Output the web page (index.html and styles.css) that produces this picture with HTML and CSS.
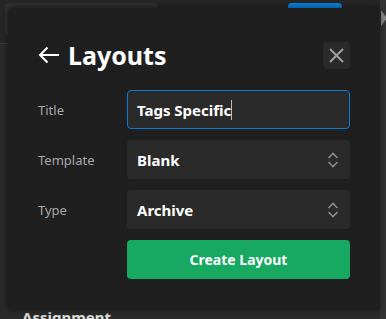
FILE: index.html
```html
<!DOCTYPE html>
<html lang="en">
<head>
    <meta charset="UTF-8">
    <title>Layouts</title>
    <link rel="stylesheet" href="styles.css">
</head>
<body>
<div class="page">
    <div class="topbar">
        <div class="search"></div>
        <div class="publish"></div>
    </div>
    <div class="section">Assignment</div>
    <div class="scroller">
        <span class="scroll-arrow"></span>
    </div>
</div>

<div class="modal">
    <div class="modal-head">
        <h1 class="heading">
            <svg class="back" width="22" height="18" viewBox="0 0 22 18">
                <path d="M21 9H2M9.5 1.5L2 9l7.5 7.5" fill="none" stroke="#fff" stroke-width="2"/>
            </svg>
            Layouts
        </h1>
        <button class="close">
            <svg width="17" height="17" viewBox="0 0 17 17">
                <path d="M2 2l13 13M15 2L2 15" stroke="#a0a0a0" stroke-width="2"/>
            </svg>
        </button>
    </div>

    <div class="form">
        <label class="label">Title</label>
        <div class="field focused">Tags Specific<span class="caret"></span></div>

        <label class="label">Template</label>
        <div class="field select">Blank
            <svg class="updown" width="12" height="16" viewBox="0 0 12 16">
                <path d="M1.5 6L6 1.5 10.5 6M1.5 10L6 14.5 10.5 10" fill="none" stroke="#8a8a8a" stroke-width="1.6"/>
            </svg>
        </div>

        <label class="label">Type</label>
        <div class="field select">Archive
            <svg class="updown" width="12" height="16" viewBox="0 0 12 16">
                <path d="M1.5 6L6 1.5 10.5 6M1.5 10L6 14.5 10.5 10" fill="none" stroke="#8a8a8a" stroke-width="1.6"/>
            </svg>
        </div>

        <span></span>
        <button class="create">Create Layout</button>
    </div>
</div>
</body>
</html>
```

FILE: styles.css
```css
body {
    margin: 0;
    background: #2a2a2a;
    font-family: "Noto Sans", "Open Sans", sans-serif;
    overflow: hidden;
}

.page {
    position: relative;
    height: 319px;
}

.topbar {
    height: 44px;
    border-bottom: 1px solid #3a3a3a;
    background: #262626;
    display: flex;
    align-items: flex-start;
    padding: 3px 0 0 5px;
    box-sizing: border-box;
}

.search {
    width: 152px;
    height: 33px;
    background: #303030;
    border-radius: 4px;
}

.publish {
    width: 54px;
    height: 14px;
    margin-left: 131px;
    background: #0a7fd6;
    border-radius: 4px 4px 0 0;
}

.section {
    position: absolute;
    left: 22px;
    top: 307px;
    color: #ddd;
    font-weight: bold;
    font-size: 15px;
}

.scroller {
    position: absolute;
    right: 0;
    top: 0;
    width: 6px;
    height: 319px;
    background: #333;
}

.scroll-arrow {
    position: absolute;
    left: 1px;
    top: 10px;
    border-top: 8px solid transparent;
    border-bottom: 8px solid transparent;
    border-left: 6px solid #8a8a8a;
}

.modal {
    position: absolute;
    left: 8px;
    top: 8px;
    width: 372px;
    height: 302px;
    background: #1f1f1f;
    border-radius: 4px;
    box-shadow: 0 0 6px rgba(0, 0, 0, 0.5);
    padding: 33px 30px 0 30px;
    box-sizing: border-box;
}

.modal-head {
    display: flex;
    align-items: center;
    justify-content: space-between;
    height: 28px;
}

.heading {
    margin: 0;
    display: flex;
    align-items: center;
    gap: 8px;
    color: #fff;
    font-size: 25px;
    font-weight: bold;
}

.close {
    width: 27px;
    height: 27px;
    border: 0;
    border-radius: 4px;
    background: #2a2a2a;
    display: flex;
    align-items: center;
    justify-content: center;
    padding: 0;
}

.form {
    margin-top: 21px;
    display: grid;
    grid-template-columns: 89px 223px;
    row-gap: 11px;
    align-items: center;
}

.label {
    color: #a8a8a8;
    font-size: 13px;
}

.field {
    height: 39px;
    box-sizing: border-box;
    background: #2a2a2a;
    border-radius: 4px;
    color: #fff;
    font-weight: bold;
    font-size: 15px;
    display: flex;
    align-items: center;
    padding: 0 10px;
}

.focused {
    border: 1px solid #0b7ad1;
    padding: 0 9px;
}

.caret {
    width: 1px;
    height: 20px;
    background: #bbb;
}

.select {
    justify-content: space-between;
}

.updown {
    margin-right: 1px;
}

.create {
    height: 39px;
    border: 0;
    border-radius: 4px;
    background: #17a862;
    color: #fff;
    font-family: inherit;
    font-weight: bold;
    font-size: 14px;
}
```
